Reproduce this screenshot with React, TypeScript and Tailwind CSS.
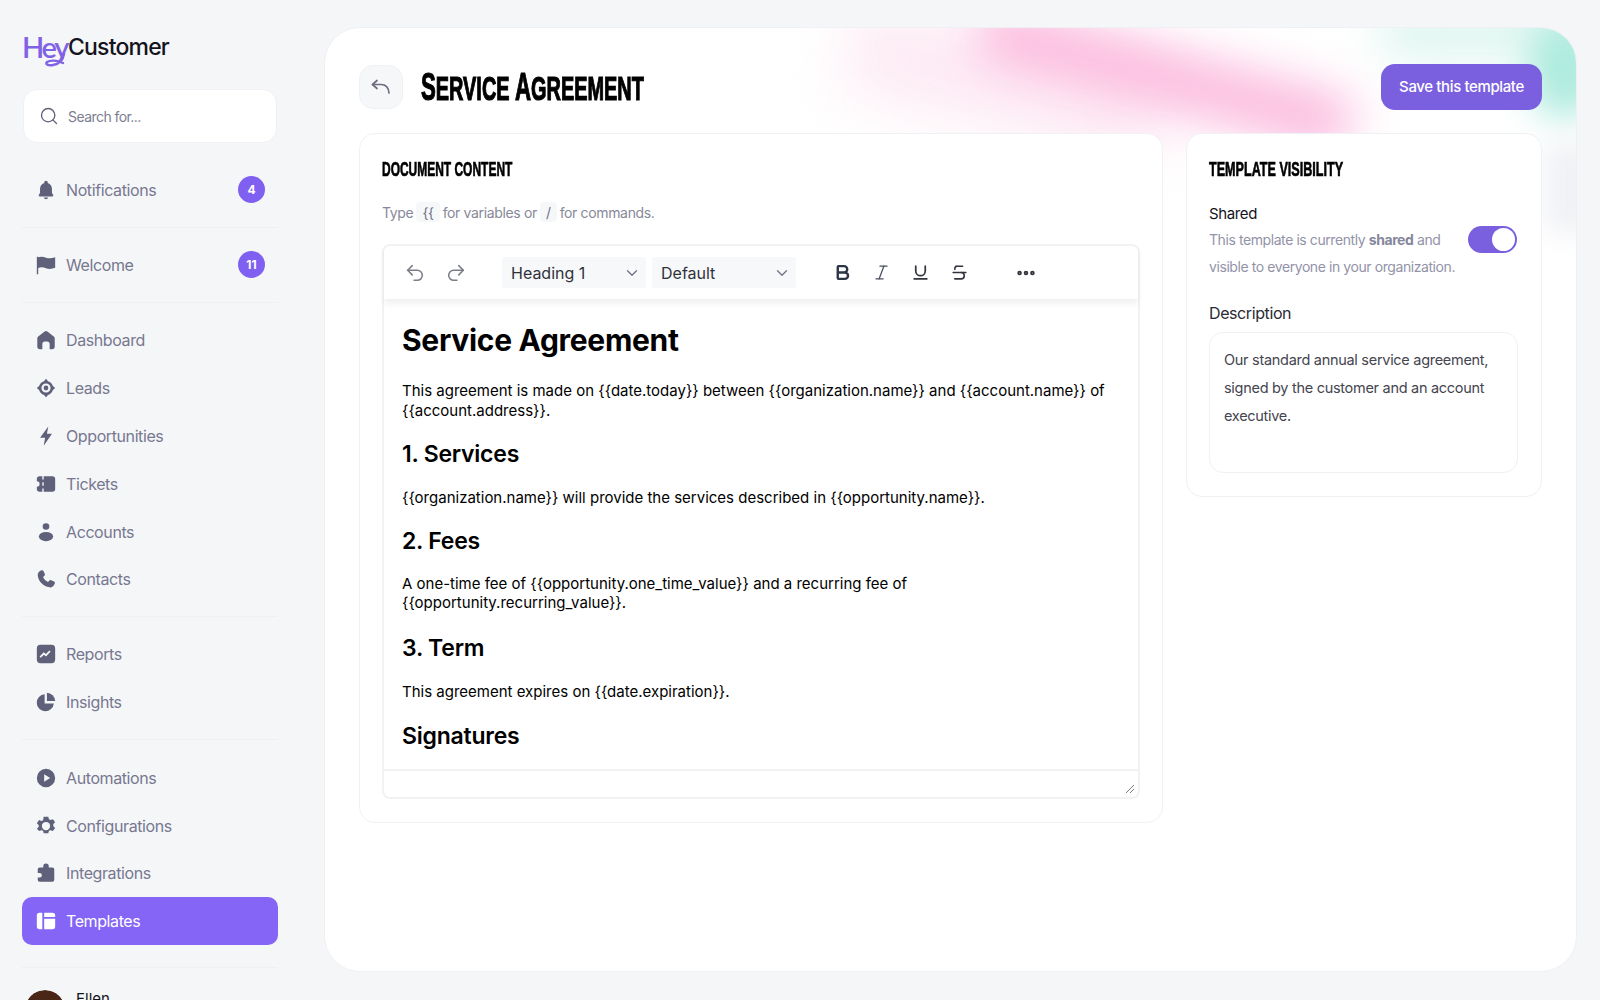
import {
  Undo2,
  Redo2,
  ChevronDown,
  Bold,
  Italic,
  Underline,
  Strikethrough,
  MoreHorizontal,
  Search,
} from 'lucide-react';
import { ReactNode } from 'react';

function Icon({ d, children }: { d?: string; children?: ReactNode }) {
  return (
    <svg viewBox="0 0 24 24" className="w-[22px] h-[22px] shrink-0" fill="currentColor">
      {d && <path d={d} />}
      {children}
    </svg>
  );
}

const icons: Record<string, ReactNode> = {
  bell: <Icon d="M12 2a2 2 0 0 0-2 2v.4C7.2 5.300 5.500 7.800 5.500 10.800V15l-1.300 2.400c-.4.700.1 1.600.9 1.600h13.800c.8 0 1.300-.9.900-1.600L18.500 15v-4.200c0-3-1.700-5.500-4.500-6.400V4a2 2 0 0 0-2-2zM9.500 20.200a2.600 2.600 0 0 0 5 0z" />,
  flag: <Icon d="M2 3h1.500v.6C6 2.600 9.500 3 12 4c2.700 1 6 1 10-.5V15c-4 1.600-7.300 1.500-10 .5-2.500-1-6-1.300-8.500-.3V22H2z" />,
  home: <Icon d="M10.500 2.700a2.400 2.400 0 0 1 3 0l7 5.500c.6.500 1 1.200 1 2V19a3 3 0 0 1-3 3h-2.500v-5.500a3 3 0 0 0-3-3h-2a3 3 0 0 0-3 3V22H5.500a3 3 0 0 1-3-3v-8.800c0-.8.400-1.500 1-2z" />,
  leads: (
    <Icon>
      <path fillRule="evenodd" d="M12 2l2.200 2.500A7.800 7.800 0 0 1 19.500 9.800L22 12l-2.500 2.200a7.800 7.800 0 0 1-5.300 5.300L12 22l-2.200-2.500a7.800 7.800 0 0 1-5.300-5.300L2 12l2.500-2.200a7.800 7.800 0 0 1 5.300-5.300zM12 7a5 5 0 1 0 0 10 5 5 0 0 0 0-10z" />
      <circle cx="12" cy="12" r="2.600" />
    </Icon>
  ),
  bolt: <Icon d="M14.500 1.500L5.500 14h5.500l-1.500 8.500 9-13h-5.500z" />,
  ticket: <Icon d="M8 3.500V7h1.500V3.500H19a3 3 0 0 1 3 3v11a3 3 0 0 1-3 3H9.500V17H8v3.500H5a3 3 0 0 1-3-3V15a3 3 0 0 0 0-6V6.500a3 3 0 0 1 3-3zM8 10v4h1.500v-4z" />,
  user: (
    <Icon>
      <circle cx="12" cy="6" r="3.600" />
      <ellipse cx="12" cy="17" rx="7.800" ry="5" />
    </Icon>
  ),
  phone: <Icon d="M7.200 2.500c.8-.3 1.600 0 2 .8l1.500 3.200c.3.700.2 1.400-.4 1.900L8.800 9.800c.9 2.300 2.900 4.400 5.400 5.400l1.500-1.500c.5-.5 1.300-.7 1.900-.4l3.200 1.500c.8.400 1.100 1.200.8 2-.8 2.800-3.200 4.700-5.800 4.300C9.200 20.300 3.700 14.800 3 8.300c-.3-2.600 1.500-5 4.200-5.800z" />,
  reports: <Icon d="M6 2h12a4 4 0 0 1 4 4v12a4 4 0 0 1-4 4H6a4 4 0 0 1-4-4V6a4 4 0 0 1 4-4zm11 7.500l-1.400-1.400-3.700 3.900-2.400-2-4.500 4.600 1.400 1.400 3.200-3.200 2.400 2z" />,
  pie: (
    <Icon>
      <path d="M10.500 3.500A9.300 9.300 0 1 0 20.500 13.500h-10z" />
      <path d="M13 2v8.800h9A9.500 9.500 0 0 0 13 2z" />
    </Icon>
  ),
  play: <Icon d="M12 2a10 10 0 1 0 0 20 10 10 0 0 0 0-20zM10 8l6.500 4-6.500 4z" />,
  gear: (
    <Icon>
      <path fillRule="evenodd" d="M9.500 2h5l.7 2.700 1.700.8 2.600-1 2.500 3.400-2 1.900v2.400l2 1.900-2.500 3.400-2.600-1-1.700.8-.7 2.700h-5l-.7-2.700-1.700-.8-2.600 1L2 15.100l2-1.900V10.800l-2-1.900 2.500-3.400 2.600 1 1.700-.8zM12 7.500a4.500 4.500 0 1 0 0 9 4.500 4.500 0 0 0 0-9z" />
    </Icon>
  ),
  puzzle: <Icon d="M12 1.500a3 3 0 0 1 3 3V6h4a2 2 0 0 1 2 2v11.500a2 2 0 0 1-2 2H5a2 2 0 0 1-2-2V17h2a2.500 2.500 0 0 0 0-5H3V8a2 2 0 0 1 2-2h4V4.500a3 3 0 0 1 3-3z" />,
  templates: (
    <Icon>
      <path d="M5 3h3v18H5a3 3 0 0 1-3-3V6a3 3 0 0 1 3-3z" />
      <path d="M10 3h9a3 3 0 0 1 3 3v1.500H10z" />
      <path d="M10 9.500h12V18a3 3 0 0 1-3 3h-9z" />
    </Icon>
  ),
};

function NavItem({ icon, label, badge, active }: { icon: string; label: string; badge?: string; active?: boolean }) {
  return (
    <div
      className={
        active
          ? 'shrink-0 flex items-center h-[47.800px] pl-[13px] pr-[13px] gap-[9px] rounded-[10px] bg-[#8465f5] text-white'
          : 'shrink-0 flex items-center h-[47.800px] pl-[13px] pr-[13px] gap-[9px] rounded-[10px] text-[#777890]'
      }
    >
      <span className={active ? 'text-white' : 'text-[#5f607a]'}>{icons[icon]}</span>
      <span className="text-[16px] tracking-[-0.025em] flex-1">{label}</span>
      {badge && (
        <span className="w-[27px] h-[27px] rounded-full bg-[#7f60f0] text-white text-[12px] font-bold flex items-center justify-center">
          {badge}
        </span>
      )}
    </div>
  );
}

function Divider() {
  return <div className="shrink-0 h-px bg-[#eef0f3] my-[13px]" />;
}

function Logo() {
  return (
    <div className="relative shrink-0 flex items-center h-[32px] leading-[32px]">
      <span className="text-[#7f62e6] text-[29px] font-semibold tracking-[-0.08em] font-['Lato',sans-serif]">Hey</span>
      <span className="text-[#14141c] text-[23px] font-medium tracking-[-0.035em] ml-px">Customer</span>
      <svg viewBox="0 0 30 16" className="absolute left-[18px] top-[22px] w-[30px] h-[16px]" fill="none" stroke="#7f62e6" strokeWidth="2.400" strokeLinecap="round">
        <path d="M24 1c-1 6-5 10-11 11-5 1-8-1-6-3 3-2 11-2 16 1" />
      </svg>
    </div>
  );
}

function Sidebar() {
  return (
    <aside className="w-[256px] ml-[22px] shrink-0 flex flex-col pt-[31px]">
      <Logo />
      <div className="mt-[26px] shrink-0 h-[54px] mx-px rounded-[14px] bg-white border border-[#f0f1f4] flex items-center pl-[15px] gap-[9px]">
        <Search className="w-[20px] h-[20px] text-[#5f607a]" strokeWidth={1.6} />
        <span className="text-[14px] tracking-[-0.04em] text-[#7c7d90]">Search for...</span>
      </div>
      <div className="mt-[23px] shrink-0">
        <NavItem icon="bell" label="Notifications" badge="4" />
      </div>
      <Divider />
      <NavItem icon="flag" label="Welcome" badge="11" />
      <div className="shrink-0 h-px bg-[#eef0f3] mt-[13px] mb-[14px]" />
      <NavItem icon="home" label="Dashboard" />
      <NavItem icon="leads" label="Leads" />
      <NavItem icon="bolt" label="Opportunities" />
      <NavItem icon="ticket" label="Tickets" />
      <NavItem icon="user" label="Accounts" />
      <NavItem icon="phone" label="Contacts" />
      <Divider />
      <NavItem icon="reports" label="Reports" />
      <NavItem icon="pie" label="Insights" />
      <div className="shrink-0 h-px bg-[#eef0f3] mt-[13px] mb-[14px]" />
      <NavItem icon="play" label="Automations" />
      <NavItem icon="gear" label="Configurations" />
      <NavItem icon="puzzle" label="Integrations" />
      <NavItem icon="templates" label="Templates" active />
      <div className="shrink-0 h-px bg-[#eef0f3] mt-[22px]" />
      <div className="shrink-0 flex items-start gap-[11px] mt-[22px] pl-[3px]">
        <svg viewBox="0 0 40 40" className="w-[40px] h-[40px] shrink-0 rounded-full">
          <circle cx="20" cy="20" r="20" fill="#4a2616" />
          <ellipse cx="20" cy="19" rx="7" ry="9" fill="#d9a283" />
          <path d="M8 40c1-9 6-12 12-12s11 3 12 12z" fill="#e6e2dd" />
        </svg>
        <span className="text-[15px] leading-[18px] text-[#14141c]">Ellen</span>
      </div>
    </aside>
  );
}

function Heading({ children, scale }: { children: ReactNode; scale: string }) {
  return (
    <h2 className="font-['Liberation_Sans',sans-serif] font-bold text-black leading-[24px] text-[21px] uppercase whitespace-nowrap [-webkit-text-stroke:0.7px_black]">
      <span className={`inline-block origin-left ${scale}`}>{children}</span>
    </h2>
  );
}

function Kbd({ children }: { children: ReactNode }) {
  return <span className="inline-flex items-center justify-center h-[20px] px-[6px] mx-[3px] rounded-[4px] bg-[#f6f7f9] text-[#6f7087]">{children}</span>;
}

function SelectBox({ label }: { label: string }) {
  return (
    <div className="w-[144px] h-[31px] rounded-[3px] bg-[#f7f8fa] flex items-center justify-between pl-[9px] pr-[5px] text-[#30323a] text-[16px]">
      <span>{label}</span>
      <ChevronDown className="w-[18px] h-[18px] text-[#6f7280]" strokeWidth={1.7} />
    </div>
  );
}

function Editor() {
  return (
    <div className="mt-[22px] rounded-[8px] border-2 border-[#f1f2f4] text-black">
      <div className="h-[53px] flex items-center pl-[20px] shadow-[0_5px_6px_rgba(0,0,0,0.06)]">
        <Undo2 className="w-[22px] h-[22px] text-[#7b7e88]" strokeWidth={1.7} />
        <Redo2 className="w-[22px] h-[22px] text-[#7b7e88] ml-[19px]" strokeWidth={1.7} />
        <div className="ml-[35px] flex gap-[6px]">
          <SelectBox label="Heading 1" />
          <SelectBox label="Default" />
        </div>
        <Bold className="w-[19px] h-[19px] text-[#2b3544] ml-[37px]" strokeWidth={3} />
        <Italic className="w-[19px] h-[19px] text-[#4a4f5c] ml-[20px]" strokeWidth={1.6} />
        <Underline className="w-[19px] h-[19px] text-[#33353d] ml-[20px]" strokeWidth={2.2} />
        <Strikethrough className="w-[19px] h-[19px] text-[#33353d] ml-[20px]" strokeWidth={2} />
        <MoreHorizontal className="w-[22px] h-[22px] text-[#33353d] ml-[46px]" strokeWidth={3} />
      </div>
      <div className="h-[472px] px-[18px] pt-[23px] text-[15px] leading-[19.500px] border-b-2 border-[#f1f2f4]">
        <h1 className="text-[30px] leading-[36px] font-bold tracking-[-0.01em]">Service Agreement</h1>
        <p className="mt-[23px]">This agreement is made on {'{{date.today}}'} between {'{{organization.name}}'} and {'{{account.name}}'} of {'{{account.address}}'}.</p>
        <h3 className="mt-[20px] text-[23px] leading-[29px] font-semibold tracking-[-0.01em]">1. Services</h3>
        <p className="mt-[19px]">{'{{organization.name}}'} will provide the services described in {'{{opportunity.name}}'}.</p>
        <h3 className="mt-[19px] text-[23px] leading-[29px] font-semibold tracking-[-0.01em]">2. Fees</h3>
        <p className="mt-[18px]">A one-time fee of {'{{opportunity.one_time_value}}'} and a recurring fee of <br />{'{{opportunity.recurring_value}}'}.</p>
        <h3 className="mt-[21px] text-[23px] leading-[29px] font-semibold tracking-[-0.01em]">3. Term</h3>
        <p className="mt-[19px]">This agreement expires on {'{{date.expiration}}'}.</p>
        <h3 className="mt-[21px] text-[23px] leading-[29px] font-semibold tracking-[-0.01em]">Signatures</h3>
      </div>
      <div className="h-[26px] flex items-end justify-end pr-[3px] pb-[3px]">
        <svg viewBox="0 0 10 10" className="w-[10px] h-[10px]" stroke="#777" strokeWidth="1">
          <path d="M1 9L9 1M5 9L9 5" />
        </svg>
      </div>
    </div>
  );
}

export default function App() {
  return (
    <div className="w-[1600px] h-[1000px] overflow-hidden bg-[#f5f6f8] flex font-['Inter',sans-serif]">
      <Sidebar />
      <main className="relative ml-[46px] mt-[27px] w-[1253px] h-[945px] rounded-[36px] bg-white border border-[#eff0f3] overflow-hidden px-[34px] pt-[36px]">
        <div className="absolute left-[520px] top-[10px] w-[320px] h-[90px] rotate-[14deg] bg-[#fdeaf4] blur-[30px]" />
        <div className="absolute left-[650px] top-[22px] w-[380px] h-[56px] rotate-[15deg] bg-[#fbb8dd] blur-[24px]" />
        <div className="absolute left-[1050px] -top-[35px] w-[240px] h-[70px] rounded-full bg-[#e2f7f2] blur-[22px]" />
        <div className="absolute left-[1205px] -top-[10px] w-[70px] h-[100px] rounded-full bg-[#aceadd] blur-[18px]" />
        <div className="absolute left-[1220px] top-[115px] w-[50px] h-[90px] bg-[#f0f1f5] blur-[14px]" />

        <div className="relative flex items-center h-[46px]">
          <div className="w-[44px] h-[44px] rounded-[14px] bg-[#f6f7f9] border border-[#f0f1f4] flex items-center justify-center">
            <svg viewBox="0 0 24 24" className="w-[24px] h-[24px]" fill="none" stroke="#6c6d80" strokeWidth="1.700" strokeLinecap="round" strokeLinejoin="round">
              <path d="M8 5.500L3.500 9.500 8 13.500" />
              <path d="M3.500 9.500H12c4.500 0 7.500 3 8 8.500" />
            </svg>
          </div>
          <div className="ml-[18px] flex-1 min-w-0 font-['Liberation_Sans',sans-serif] font-bold text-black uppercase whitespace-nowrap [-webkit-text-stroke:1.2px_black]">
            <span className="inline-block origin-left scale-x-[0.585] text-[34px] leading-[40px]">
              <span className="text-[38px]">S</span>ervice <span className="text-[38px]">A</span>greement
            </span>
          </div>
          <button className="w-[161px] h-[46px] shrink-0 rounded-[14px] bg-[#7a5fdf] text-white text-[15px] font-medium tracking-[-0.025em]">Save this template</button>
        </div>

        <div className="relative mt-[23px] flex gap-[23px] items-start">
          <section className="w-[804px] h-[690px] rounded-[16px] bg-white border border-[#f0f1f4] px-[22px] pt-[23px]">
            <Heading scale="scale-x-[0.57]">Document content</Heading>
            <p className="mt-[21px] h-[20px] text-[14px] tracking-[-0.025em] text-[#878899] flex items-center">
              Type <Kbd>{'{{'}</Kbd> for variables or <Kbd>/</Kbd> for commands.
            </p>
            <Editor />
          </section>
          <section className="w-[356px] h-[364px] rounded-[16px] bg-white border border-[#f0f1f4] pl-[22px] pr-[23px] pt-[23px]">
            <Heading scale="scale-x-[0.6]">Template visibility</Heading>
            <div className="mt-[21px] flex items-center justify-between">
              <div>
                <div className="text-[15px] leading-[24px] tracking-[-0.025em] text-[#14141c]">Shared</div>
                <p className="text-[14px] leading-[27px] tracking-[-0.03em] text-[#9293a8]">
                  This template is currently <b className="text-[#86879c] font-bold">shared</b> and
                  <br />
                  visible to everyone in your organization.
                </p>
              </div>
              <div className="w-[49px] h-[27px] mr-px rounded-full bg-[#7a5fdf] flex items-center justify-end pr-[2px] -mt-[3px]">
                <div className="w-[23px] h-[23px] rounded-full bg-white" />
              </div>
            </div>
            <div className="mt-[22px] text-[16px] leading-[22px] tracking-[-0.025em] text-[#2a2a33]">Description</div>
            <div className="mt-[8px] h-[141px] rounded-[14px] border border-[#f0f1f4] px-[14px] pt-[13px] text-[14.500px] leading-[28px] tracking-[-0.02em] text-[#44454f]">
              Our standard annual service agreement, signed by the customer and an account executive.
            </div>
          </section>
        </div>
      </main>
    </div>
  );
}
